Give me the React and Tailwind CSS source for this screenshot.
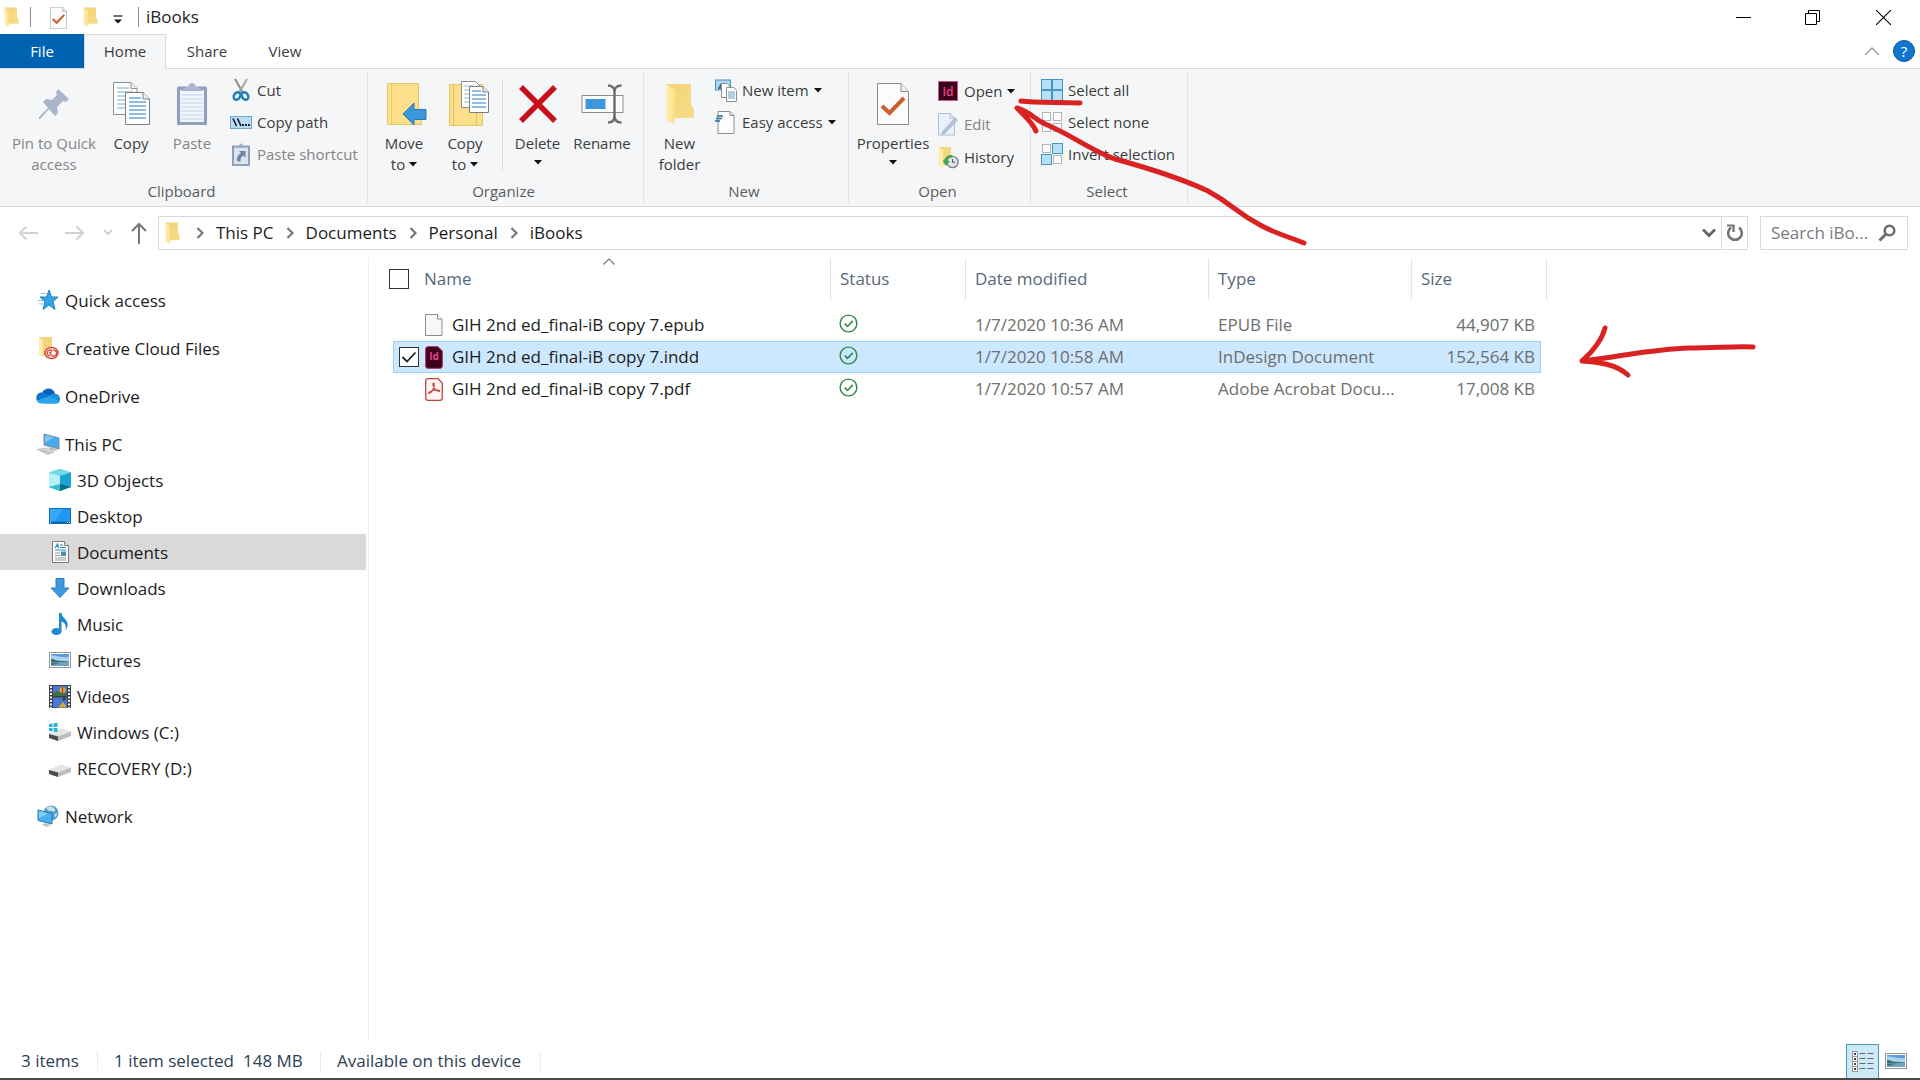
import React from "react";

const Folder = ({ className = "w-4 h-5" }) => (
  <svg viewBox="0 0 30 42" preserveAspectRatio="none" className={className} aria-hidden="true">
    <defs>
      <linearGradient id="folderBack" x1="0" y1="0" x2="1" y2="1">
        <stop offset="0" stopColor="#f3d37a" />
        <stop offset="1" stopColor="#f7dc83" />
      </linearGradient>
      <linearGradient id="folderFlap" x1="0" y1="0" x2="1" y2="0">
        <stop offset="0" stopColor="#fff0b8" />
        <stop offset="1" stopColor="#fbe08a" />
      </linearGradient>
    </defs>
    <path d="M1 1H26V22L29 26V35H5Z" fill="url(#folderBack)" />
    <path d="M1 1L10 7V38L8 41L1 37Z" fill="url(#folderFlap)" />
  </svg>
);

const PropsPage = ({ className = "w-8 h-[42px]" }) => (
  <svg viewBox="0 0 32 42" className={className} aria-hidden="true">
    <path d="M.5.5H24L31.500 8.500V41.500H.5Z" fill="#fcfcfc" stroke="#8b8b8b" />
    <path d="M24 .5V8.500H31.500" fill="#eee" stroke="#8b8b8b" />
    <path d="M5 23L12.500 30L27 15" fill="none" stroke="#cc5f2c" strokeWidth="4" />
  </svg>
);

const PinIcon = () => (
  <svg viewBox="0 0 32 32" className="w-8 h-8" aria-hidden="true">
    <path d="M20 1L31 11L28 14L25 13L19 19L20 25L17 28L11 21L2 31L1 31L1 29L10 20L5 14L8 11L14 12L19 7L18 4Z" fill="#a9b5c9" />
  </svg>
);

const Lines = ({ x, y, w, n, gap = 4, color = "#4a94c4" }) =>
  Array.from({ length: n }, (_, i) => (
    <path key={i} d={`M${x} ${y + i * gap}h${w}`} stroke={color} strokeWidth="1.2" />
  ));

const CopyIcon = () => (
  <svg viewBox="0 0 37 43" className="w-[37px] h-[43px]" aria-hidden="true">
    <path d="M.5.500H18L24 6.500V32.500H.5Z" fill="#fdfdfd" stroke="#8e8e8e" />
    <path d="M18 .5V6.500H24" fill="#eee" stroke="#8e8e8e" />
    <Lines x={4} y={6} w={12} n={1} color="#8fbad8" />
    <Lines x={4} y={10} w={16} n={5} color="#8fbad8" />
    <path d="M12.500 10.500H30L36.500 17V42.500H12.500Z" fill="#fdfdfd" stroke="#7e7e7e" />
    <path d="M30 10.500V17H36.500" fill="#eee" stroke="#7e7e7e" />
    <Lines x={16} y={16} w={12} n={1} />
    <Lines x={16} y={20} w={17} n={5} />
  </svg>
);

const PasteIcon = () => (
  <svg viewBox="0 0 32 44" className="w-8 h-11" aria-hidden="true">
    <rect x="1" y="4.500" width="30" height="38.500" rx="1.500" fill="#8f9fbc" />
    <rect x="4" y="8" width="24" height="32" fill="#f1f4fb" />
    <Lines x={5} y={13} w={22} n={7} color="#cdd8ec" />
    <path d="M5 9C7 5 11 6 12.500 4C13 0 19 0 19.500 4C21 6 25 5 27 9Z" fill="#a9b6cd" />
  </svg>
);

const CutIcon = () => (
  <svg viewBox="0 0 22 24" className="w-[22px] h-6" fill="none" aria-hidden="true">
    <path d="M5 1L13 15" stroke="#8a8a8a" strokeWidth="2" />
    <path d="M17 1L9 15" stroke="#a5a5a5" strokeWidth="2" />
    <ellipse cx="7" cy="18" rx="3" ry="4" transform="rotate(35 7 18)" stroke="#1f7fb5" strokeWidth="2.400" />
    <ellipse cx="15" cy="18" rx="3" ry="4" transform="rotate(-35 15 18)" stroke="#1f7fb5" strokeWidth="2.400" />
  </svg>
);

const CopyPathIcon = () => (
  <svg viewBox="0 0 22 13" className="w-[22px] h-[13px]" aria-hidden="true">
    <rect x=".5" y=".5" width="21" height="12" fill="#b8dcf6" stroke="#6ea7cf" />
    <path d="M3 2.500L6.500 10M7.500 2.500L11 10" stroke="#1a1a1a" strokeWidth="1.600" />
    <path d="M12 9h1.800M15 9h1.800M18 9h1.800" stroke="#1a1a1a" strokeWidth="1.800" />
  </svg>
);

const PasteShortcutIcon = () => (
  <svg viewBox="0 0 18 23" className="w-[18px] h-[23px]" aria-hidden="true">
    <rect x="1" y="3.500" width="16" height="18.500" fill="#dde4f1" stroke="#8f9fbc" strokeWidth="2" />
    <path d="M4 5C5 3 7 3 7.500 2C8 0 10 0 10.500 2C11 3 13 3 14 5Z" fill="#a0aec7" />
    <path d="M7 8H13.500V14.500L11.500 12.500C9.500 13.500 8 15.500 8.500 19L5 18C4.500 14.500 6.500 11.500 9 10Z" fill="#71839f" />
  </svg>
);

const MoveToIcon = () => (
  <svg viewBox="0 0 40 44" className="ml-[6px] w-10 h-11" aria-hidden="true">
    <path d="M.5 1.500H31.500V25L34.500 29V42.500H.5Z" fill="#fbdf8a" stroke="#e6c568" />
    <path d="M4.500 2V42" stroke="#eccb72" />
    <path d="M16 32L27 21V27.500H39V37.500H27V43Z" fill="#3c96dc" stroke="#2b78b8" />
  </svg>
);

const CopyToIcon = () => (
  <svg viewBox="0 0 40 46" className="ml-[8px] w-10 h-[46px]" aria-hidden="true">
    <path d="M.5 3.500H33.500V44.500H.5Z" fill="#fbdf8a" stroke="#e6c568" />
    <path d="M4.500 4V44M27.500 31V44" stroke="#e3c165" />
    <path d="M12.500.5H26.500L31 5V26.500H12.500Z" fill="#fdfdfd" stroke="#8e8e8e" />
    <Lines x={15} y={5} w={9} n={5} gap={4} color="#a9c3d6" />
    <path d="M20.500 5.500H34L39.500 11V31.500H20.500Z" fill="#fdfdfd" stroke="#7e7e7e" />
    <path d="M34 5.500V11H39.500" fill="#eee" stroke="#7e7e7e" />
    <Lines x={23} y={10} w={9} n={1} />
    <Lines x={23} y={14} w={14} n={4} />
  </svg>
);

const DeleteIcon = () => (
  <svg viewBox="0 0 38 38" className="w-[38px] h-[38px]" aria-hidden="true">
    <path d="M2 2L36 36M36 2L2 36" stroke="#c8101c" strokeWidth="5.500" />
  </svg>
);

const RenameIcon = () => (
  <svg viewBox="0 0 43 40" className="w-[43px] h-10" fill="none" aria-hidden="true">
    <rect x="1" y="11.500" width="41" height="17" fill="#fcfcfc" stroke="#8e8e8e" />
    <rect x="4.500" y="15" width="20" height="10" fill="#3b97e0" />
    <path d="M27 1.500C31 1.500 33.500 4 33.500 7.500C33.500 4 36 1.500 40.500 1.500M33.500 6V33M27 38.500C31 38.500 33.500 36 33.500 32C33.500 36 36 38.500 40.500 38.500" stroke="#6b6b6b" strokeWidth="2.400" />
  </svg>
);

const NewItemIcon = () => (
  <svg viewBox="0 0 22 23" className="w-[22px] h-[23px]" aria-hidden="true">
    <rect x=".5" y="1" width="15" height="10" fill="#a9d8ee" stroke="#4a8fb5" />
    <path d="M3 9L6 4L8 8L9 6V10H3Z" fill="#3f6d86" />
    <path d="M6.500 4.500H12L14.500 7V18.500H6.500Z" fill="#fcfcfc" stroke="#8e8e8e" />
    <path d="M11.500 8.500H18.500L21.500 11.500V22.500H11.500Z" fill="#fcfcfc" stroke="#8e8e8e" />
    <Lines x={13} y={13} w={7} n={4} gap={2} color="#7fb0cf" />
  </svg>
);

const EasyIcon = () => (
  <svg viewBox="0 0 22 23" className="w-[22px] h-[23px]" aria-hidden="true">
    <path d="M3 .5H15L19 4.500V22.500H3Z" fill="#fcfcfc" stroke="#8e8e8e" />
    <path d="M15 .5V4.500H19" fill="none" stroke="#8e8e8e" />
    <path d="M2 5h6M1 7.500h6M0 10h5" stroke="#2a6d9e" strokeWidth="1.500" />
  </svg>
);

const IdSquare = () => (
  <svg viewBox="0 0 22 22" className="w-[22px] h-[22px]" aria-hidden="true">
    <rect x="1.500" y="1.500" width="19" height="19" fill="#3a0319" stroke="#c85a86" />
    <text x="11" y="15.500" textAnchor="middle" fontSize="12" fontWeight="600" fontFamily="Open Sans, sans-serif" fill="#e8418b">Id</text>
  </svg>
);

const EditIcon = () => (
  <svg viewBox="0 0 22 23" className="w-[22px] h-[23px]" aria-hidden="true">
    <path d="M1.500.5H13L17.500 5V22H1.500Z" fill="#eaf0fa" stroke="#b1bdd3" />
    <path d="M13 .5V5H17.500" fill="none" stroke="#b1bdd3" />
    <path d="M18 5L20.500 7L8 20L5 21L6 18Z" fill="#b4c1d8" stroke="#93a3c0" strokeWidth=".6" />
  </svg>
);

const HistoryIcon = () => (
  <svg viewBox="0 0 22 23" className="w-[22px] h-[23px]" aria-hidden="true">
    <path d="M1.500 1H14V19H4Z" fill="#f4d67e" />
    <path d="M1.500 1L6 4V21L5 22L1.500 19Z" fill="#ffeeb0" />
    <circle cx="15.500" cy="16" r="5.600" fill="#dfe3e6" stroke="#7f878c" strokeWidth="1.400" />
    <path d="M15.500 13V16.300H18" fill="none" stroke="#555" />
    <path d="M8 16C8.500 12 12 9.500 15 10.500" fill="none" stroke="#3fa348" strokeWidth="2.400" />
    <path d="M5.500 14.500L13 15L9 20Z" fill="#3fa348" />
  </svg>
);

const Grid4 = ({ on }) => {
  const cells = [[1, 1], [12, 1], [1, 12], [12, 12]];
  return (
    <svg viewBox="0 0 22 22" className="w-[22px] h-[22px]" aria-hidden="true">
      {cells.map(([x, y], i) =>
        on[i] ? (
          <rect key={i} x={x - 0.5} y={y - 0.5} width="10" height="10" fill="#b5e0f8" stroke="#4595bf" />
        ) : (
          <rect key={i} x={x + 0.5} y={y + 0.5} width="8" height="8" fill="#fbfcfd" stroke="#b3b3b3" />
        )
      )}
    </svg>
  );
};

const Caret = () => (
  <svg viewBox="0 0 8 5" className="inline-block h-[5px] w-2 shrink-0" aria-hidden="true">
    <path d="M0 0H8L4 4.500Z" fill="#111" />
  </svg>
);

const BigButton = ({ icon, l1, l2, caret, disabled, width }) => (
  <button className={`flex flex-col items-center ${width} ${disabled ? "text-[#848484]" : "text-[#3c3c3c]"}`}>
    <span className="flex h-[59px] items-center justify-center">{icon}</span>
    <span className="whitespace-nowrap leading-[21px]">{l1}</span>
    {(l2 || caret) && (
      <span className={`flex items-center gap-1 whitespace-nowrap leading-[21px] ${l2 ? "h-[21px]" : "h-[17px]"}`}>
        {l2}
        {caret && <Caret />}
      </span>
    )}
  </button>
);

const SmallButton = ({ icon, label, caret, disabled }) => (
  <button className={`flex h-8 items-center gap-[5px] whitespace-nowrap ${disabled ? "text-[#848484]" : "text-[#3c3c3c]"}`}>
    <span className="flex w-[22px] justify-center">{icon}</span>
    <span>{label}</span>
    {caret && <Caret />}
  </button>
);

const Group = ({ label, width, children }) => (
  <section aria-label={label} className={`my-[3px] flex shrink-0 flex-col border-r border-[#e0e2e4] ${width}`}>
    <div className="flex h-[108px] pt-[2px]">{children}</div>
    <h2 className="pr-1 text-center leading-[22px] text-[#5c5c5c]">{label}</h2>
  </section>
);

const StarIcon = () => (
  <svg viewBox="0 0 22 22" className="w-[22px] h-[22px]" aria-hidden="true">
    <path d="M12 1L14.500 8H21L16 12.500L18 20.500L12 16L6 20.500L8 12.500L3 8H9.500Z" fill="#36a3e6" stroke="#2182bd" />
    <path d="M4 4.500h5M1 11.500h5M2 15h4" stroke="#83c3e8" strokeWidth="1.200" />
  </svg>
);
const CloudFolderIcon = () => (
  <svg viewBox="0 0 22 24" className="w-[22px] h-6" aria-hidden="true">
    <path d="M2 1H15V20H5Z" fill="#f4d67e" />
    <path d="M2 1L6 4V21L2 19Z" fill="#ffedb0" />
    <ellipse cx="14.500" cy="17" rx="6.500" ry="5.600" fill="#fff" stroke="#d8402f" strokeWidth="1.500" />
    <path d="M13 20a3 3 0 1 1 2-5.300M16 14.200a3 3 0 1 1-1 5.500L12.800 17.200M12 17l3-1.500" fill="none" stroke="#d8402f" strokeWidth="1.300" />
  </svg>
);
const OneDriveIcon = () => (
  <svg viewBox="0 0 24 16" className="w-6 h-4" aria-hidden="true">
    <path d="M6 5C8-.5 17-1.500 19 5.500L12 10L4 8Z" fill="#0a5fb8" />
    <path d="M6 4.500C1 4 -1 9.500 1 13L14 8.500L10 5.500Z" fill="#1177cf" />
    <path d="M13 8C17 4 24 5.500 24 11C24 14 22 15.500 20 15.500H9Z" fill="#1d8fe0" />
    <path d="M1 13C2 15 4 15.500 6 15.500H20C22 15.500 23 14.500 23.500 13.500L13.500 8Z" fill="#2ba4ef" />
  </svg>
);
const PcIcon = () => (
  <svg viewBox="0 0 24 22" className="w-6 h-[22px]" aria-hidden="true">
    <path d="M8 1L23 5V16L8 12Z" fill="#46abee" stroke="#7d8c98" />
    <path d="M9 2L18 4.500L9 10Z" fill="#7cc5f5" />
    <path d="M13 14L19 15.500L22 18L14 17Z" fill="#b5bcc2" />
    <path d="M1 16.500L11 15L18 19L12 21.500Z" fill="#e1e4e6" stroke="#a8adb1" strokeWidth=".7" />
    <path d="M4 17L13 20M7 16.500L15 19.500" stroke="#a8adb1" strokeWidth=".8" />
  </svg>
);
const CubeIcon = () => (
  <svg viewBox="0 0 22 22" className="w-[22px] h-[22px]" aria-hidden="true">
    <path d="M11 0L22 3.500V18L11 22L0 18V3.500Z" fill="#28b2cc" />
    <path d="M0 3.500L11 0L22 3.500L11 8Z" fill="#6fd9e6" />
    <path d="M0 3.500L11 7V16L0 18Z" fill="#b5f0f4" />
    <path d="M11 7L22 3.500V18L11 15Z" fill="#19a5cf" />
    <path d="M11 15L22 18L11 22Z" fill="#0b6a8a" />
    <path d="M0 18L11 15V22Z" fill="#2fc0d3" />
  </svg>
);
const DesktopIcon = () => (
  <svg viewBox="0 0 22 16" className="w-[22px] h-4" aria-hidden="true">
    <rect x=".5" y=".5" width="21" height="15" fill="#1e98f0" stroke="#0f6db5" />
    <path d="M1 1H14L5 14H1Z" fill="#36a8f8" />
    <path d="M1 14.500H21" stroke="#0c5d9e" strokeWidth="1.500" />
    <path d="M1 14.500h1M18 14.500h1M20 14.500h1" stroke="#fff" />
  </svg>
);
const DocIcon = () => (
  <svg viewBox="0 0 17 22" className="w-[17px] h-[22px]" aria-hidden="true">
    <path d="M.5.5H12.500L16.500 4.500V21.500H.5Z" fill="#fdfdfd" stroke="#7c7c7c" />
    <path d="M12.500.5V4.500H16.500" fill="#e5e5e5" stroke="#7c7c7c" />
    <path d="M3 7L5.500 3L6.500 7M4 5.500H6" fill="none" stroke="#2f8fc4" strokeWidth="1.200" />
    <path d="M8 4h3M8 6.500h6M3 9h11" stroke="#2f8fc4" strokeWidth="1.200" />
    <path d="M3 12h5M3 14.500h5M3 17h11M3 19h11" stroke="#9a9a9a" />
    <rect x="9" y="10.500" width="5" height="4.500" fill="#4c8fb5" />
  </svg>
);
const DownIcon = () => (
  <svg viewBox="0 0 20 20" className="w-5 h-5" aria-hidden="true">
    <path d="M6 .5H14V10H19L10 19.500L1 10H6Z" fill="#3f97dd" stroke="#2f7dbd" />
  </svg>
);
const MusicIcon = () => (
  <svg viewBox="0 0 18 22" className="w-[18px] h-[22px]" aria-hidden="true">
    <ellipse cx="5.500" cy="18.500" rx="5" ry="3.500" fill="#1c8ad0" />
    <path d="M8 0H10.500C11 5 17 6 16.500 12C16.300 14.500 15.500 16 14.500 17C15.500 12 14 10 10.500 8.500V18.500H8Z" fill="#1c8ad0" />
  </svg>
);
const PictureIcon = () => (
  <svg viewBox="0 0 22 16" className="w-[22px] h-4" aria-hidden="true">
    <rect x=".5" y=".5" width="21" height="15" fill="#fff" stroke="#8f989e" />
    <rect x="2" y="2" width="18" height="12" fill="#a9d3f0" />
    <path d="M2 3.500C8 3 12 6 20 5V2H2Z" fill="#5d9cd8" />
    <path d="M2 6.500L8 8.500L20 9.500V10.500H2Z" fill="#3c6f68" />
    <path d="M2 10.500H20V14H2Z" fill="#6fa3bf" />
    <path d="M2 10.500H11L5 13H2Z" fill="#47788a" />
  </svg>
);
const VideoIcon = () => (
  <svg viewBox="0 0 22 23" className="w-[22px] h-[23px]" aria-hidden="true">
    <rect width="22" height="23" fill="#3a3f4a" />
    <rect x="4" y="1" width="14" height="10" fill="#4a76d4" />
    <rect x="4" y="12.500" width="14" height="10" fill="#4a76d4" />
    <path d="M4 8L9 6L14 9L18 8V11H4Z" fill="#426f3c" />
    <circle cx="13.500" cy="5" r="3" fill="#e7b52c" />
    <path d="M13.500 2V8" stroke="#b33a2a" strokeWidth="1.500" />
    <path d="M9 22.500L14 17L18 22.500Z" fill="#e0a72d" />
    <circle cx="15" cy="14" r="1.500" fill="#3a2d20" />
    <path d="M2 1V23M20 1V23" stroke="#f2f2f2" strokeWidth="2" strokeDasharray="2 1.500" />
  </svg>
);
const DriveIcon = ({ win }) => (
  <svg viewBox="0 0 22 20" className="w-[22px] h-5" aria-hidden="true">
    <path d="M0 12L12 7L22 9.500V14L9 19L0 16Z" fill="#bdbdbd" />
    <path d="M0 12L12 7L22 9.500L9 14.500Z" fill="#e6e6e6" />
    <path d="M0 12L9 14.500V19L0 16Z" fill="#4c4c4c" />
    {win && (
      <g fill="#2bb4d2">
        <path d="M0 2L3.500 1.500V5H0ZM4.500 1.300L8.500 .700V5H4.500ZM0 6H3.500V9.500L0 9ZM4.500 6H8.500V10.200L4.500 9.600Z" />
      </g>
    )}
  </svg>
);
const NetworkIcon = () => (
  <svg viewBox="0 0 22 22" className="w-[22px] h-[22px]" aria-hidden="true">
    <circle cx="14" cy="8" r="7.500" fill="#4f9ac6" />
    <path d="M10 2C14 0 19 3 18 6C16 8 15 5 13 6C11 6 9 4 10 2ZM17 9L21 8L18 13Z" fill="#bfe0ee" />
    <path d="M1 5L15 8.500V19L1 15.500Z" fill="#4bb1ee" stroke="#2c7db0" />
    <path d="M2 6L11 8.500L2 13Z" fill="#86cdf6" />
    <path d="M5 19.500L9 18L14 20.500L9 22Z" fill="#b9c4cb" />
  </svg>
);

const NAV = [
  { label: "Quick access", icon: <StarIcon />, gap: false },
  { label: "Creative Cloud Files", icon: <CloudFolderIcon />, gap: true },
  { label: "OneDrive", icon: <OneDriveIcon />, gap: true },
  { label: "This PC", icon: <PcIcon />, gap: true },
  { label: "3D Objects", icon: <CubeIcon />, sub: true },
  { label: "Desktop", icon: <DesktopIcon />, sub: true },
  { label: "Documents", icon: <DocIcon />, sub: true, active: true },
  { label: "Downloads", icon: <DownIcon />, sub: true },
  { label: "Music", icon: <MusicIcon />, sub: true },
  { label: "Pictures", icon: <PictureIcon />, sub: true },
  { label: "Videos", icon: <VideoIcon />, sub: true },
  { label: "Windows (C:)", icon: <DriveIcon win />, sub: true },
  { label: "RECOVERY (D:)", icon: <DriveIcon />, sub: true },
  { label: "Network", icon: <NetworkIcon />, gap: true },
];

const EpubIcon = () => (
  <svg viewBox="0 0 18 22" className="w-[18px] h-[22px]" aria-hidden="true">
    <path d="M.5.5H12.500L17 5V21.500H.5Z" fill="#f6f7f9" stroke="#8c8c8c" />
    <path d="M12.500.5V5H17" fill="#fff" stroke="#8c8c8c" />
  </svg>
);
const InddIcon = () => (
  <svg viewBox="0 0 18 23" className="w-[18px] h-[23px]" aria-hidden="true">
    <path d="M3 .7H13L17.300 5V20C17.300 21.500 16.500 22.300 15 22.300H3C1.500 22.300 .7 21.500 .7 20V3C.7 1.500 1.500 .7 3 .7Z" fill="#3a0319" stroke="#b5245f" />
    <text x="9" y="14" textAnchor="middle" fontSize="10" fontWeight="700" fontFamily="Open Sans, sans-serif" fill="#e8418b">Id</text>
  </svg>
);
const PdfIcon = () => (
  <svg viewBox="0 0 18 23" className="w-[18px] h-[23px]" fill="none" aria-hidden="true">
    <path d="M3 .7H13L17.300 5V20C17.300 21.500 16.500 22.300 15 22.300H3C1.500 22.300 .7 21.500 .7 20V3C.7 1.500 1.500 .7 3 .7Z" fill="#fdf4f3" stroke="#c2453e" strokeWidth="1.300" />
    <path d="M4 15.500C6.500 15 9.500 10 9.200 6.500C9 4.500 7.500 5 8 7C8.700 10.500 12 13.500 14.500 13.500C15.500 12 11 11.500 8 12.500C5.500 13.200 3 14.800 4 15.500Z" stroke="#c2453e" strokeWidth="1.200" />
  </svg>
);

const FILES = [
  { name: "GIH 2nd ed_final-iB copy 7.epub", icon: <EpubIcon />, date: "1/7/2020 10:36 AM", type: "EPUB File", size: "44,907 KB" },
  { name: "GIH 2nd ed_final-iB copy 7.indd", icon: <InddIcon />, date: "1/7/2020 10:58 AM", type: "InDesign Document", size: "152,564 KB", selected: true },
  { name: "GIH 2nd ed_final-iB copy 7.pdf", icon: <PdfIcon />, date: "1/7/2020 10:57 AM", type: "Adobe Acrobat Docu...", size: "17,008 KB" },
];

const Synced = () => (
  <svg viewBox="0 0 20 20" className="mb-[3px] block h-[19px] w-[19px]" fill="none" role="img" aria-label="Available">
    <circle cx="10" cy="10" r="8.800" stroke="#35894a" strokeWidth="1.500" />
    <path d="M6 10.200L9 13L14.500 7.300" stroke="#35894a" strokeWidth="1.800" />
  </svg>
);

const Crumb = ({ label }) => (
  <>
    <svg viewBox="0 0 8 12" className="mx-3 h-3 w-2 shrink-0" fill="none" aria-hidden="true">
      <path d="M1.500 1L6.500 6L1.500 11" stroke="#777" strokeWidth="2.200" />
    </svg>
    <button className="whitespace-nowrap">{label}</button>
  </>
);

function TitleBar() {
  return (
    <header className="flex h-[34px] items-center bg-white">
      <div className="flex flex-1 items-center">
        <span className="ml-1"><Folder className="h-5 w-[15px]" /></span>
        <span className="ml-[11px] h-5 w-px bg-[#8e8e8e]" />
        <button aria-label="Properties" className="ml-[19px] mt-[2px]"><PropsPage className="h-[22px] w-[17px]" /></button>
        <button aria-label="New folder" className="ml-4"><Folder className="h-5 w-[15px]" /></button>
        <button aria-label="Customize Quick Access Toolbar" className="ml-[15px] mt-1">
          <svg viewBox="0 0 10 9" className="h-[9px] w-[10px]" aria-hidden="true">
            <path d="M.5 1H9.500" stroke="#111" strokeWidth="1.200" />
            <path d="M1 4.500H9L5 8.500Z" fill="#111" />
          </svg>
        </button>
        <span className="ml-[15px] h-5 w-px bg-[#8e8e8e]" />
        <h1 className="ml-[7px] text-[17px] leading-6 text-[#222]">iBooks</h1>
      </div>
      <div className="flex items-center">
        <button aria-label="Minimize" className="flex h-[34px] w-[70px] items-center justify-center">
          <svg viewBox="0 0 15 15" className="h-[15px] w-[15px]" aria-hidden="true"><path d="M0 7.500H15" stroke="#000" /></svg>
        </button>
        <button aria-label="Restore" className="flex h-[34px] w-[69px] items-center justify-center">
          <svg viewBox="0 0 15 15" className="h-[15px] w-[15px]" fill="none" stroke="#000" aria-hidden="true">
            <path d="M.5 3.500H11.500V14.500H.5ZM3.500 3.500V.5H14.500V11.500H11.500" />
          </svg>
        </button>
        <button aria-label="Close" className="flex h-[34px] w-[73px] items-center justify-center">
          <svg viewBox="0 0 15 15" className="h-[15px] w-[15px]" aria-hidden="true"><path d="M0 0L15 15M15 0L0 15" stroke="#000" strokeWidth="1.100" /></svg>
        </button>
      </div>
    </header>
  );
}

function Tabs() {
  return (
    <nav className="flex h-[35px] border-b border-[#d9dadc] bg-white text-[15px] text-[#3c3c3c]">
      <button className="w-[84px] bg-[#0063b1] text-white">File</button>
      <button className="-mb-px w-[82px] border border-b-0 border-[#d9dadc] bg-[#f5f6f8] pb-px">Home</button>
      <button className="w-[82px]">Share</button>
      <button className="w-[74px]">View</button>
      <div className="ml-auto flex items-center pr-[5px]">
        <button aria-label="Minimize the Ribbon" className="mr-[13px]">
          <svg viewBox="0 0 16 10" className="h-[10px] w-4" fill="none" aria-hidden="true"><path d="M1 9L8 2L15 9" stroke="#a2a2a2" strokeWidth="1.500" /></svg>
        </button>
        <button aria-label="Help" className="flex h-[22px] w-[22px] items-center justify-center rounded-full border border-[#0a5a9c] bg-[#1177cc] text-[15px] leading-none text-white">?</button>
      </div>
    </nav>
  );
}

function Ribbon() {
  return (
    <div className="flex h-[138px] border-b border-[#d9dadc] bg-[#f5f6f8] text-[15px]">
      <Group label="Clipboard" width="w-[368px]">
        <BigButton width="w-[108px]" icon={<PinIcon />} l1="Pin to Quick" l2="access" disabled />
        <BigButton width="w-[46px]" icon={<CopyIcon />} l1="Copy" />
        <BigButton width="w-[76px]" icon={<PasteIcon />} l1="Paste" disabled />
        <div className="flex flex-col">
          <SmallButton icon={<CutIcon />} label="Cut" />
          <SmallButton icon={<CopyPathIcon />} label="Copy path" />
          <SmallButton icon={<PasteShortcutIcon />} label="Paste shortcut" disabled />
        </div>
      </Group>
      <Group label="Organize" width="w-[276px]">
        <BigButton width="w-[72px]" icon={<MoveToIcon />} l1="Move" l2="to" caret />
        <BigButton width="w-[50px]" icon={<CopyToIcon />} l1="Copy" l2="to" caret />
        <span className="ml-3 mt-[6px] h-[91px] w-px bg-[#d9dbdd]" />
        <BigButton width="w-[69px]" icon={<DeleteIcon />} l1="Delete" caret />
        <BigButton width="w-[60px]" icon={<RenameIcon />} l1="Rename" />
      </Group>
      <Group label="New" width="w-[205px]">
        <BigButton width="w-[71px]" icon={<Folder className="h-[42px] w-[30px]" />} l1="New" l2="folder" />
        <div className="flex flex-col">
          <SmallButton icon={<NewItemIcon />} label="New item" caret />
          <SmallButton icon={<EasyIcon />} label="Easy access" caret />
        </div>
      </Group>
      <Group label="Open" width="w-[182px]">
        <BigButton width="w-[88px]" icon={<PropsPage />} l1="Properties" caret />
        <div className="flex flex-col gap-px pt-px">
          <SmallButton icon={<IdSquare />} label="Open" caret />
          <SmallButton icon={<EditIcon />} label="Edit" disabled />
          <SmallButton icon={<HistoryIcon />} label="History" />
        </div>
      </Group>
      <Group label="Select" width="w-[157px]">
        <div className="ml-[10px] flex flex-col">
          <SmallButton icon={<Grid4 on={[1, 1, 1, 1]} />} label="Select all" />
          <SmallButton icon={<Grid4 on={[0, 0, 0, 0]} />} label="Select none" />
          <SmallButton icon={<Grid4 on={[0, 1, 1, 0]} />} label="Invert selection" />
        </div>
      </Group>
    </div>
  );
}

function AddressBar() {
  return (
    <div className="flex h-[51px] items-center pr-3 text-[17px] text-[#1c1c1c]">
      <div className="flex w-[158px] items-center">
        <button aria-label="Back" className="ml-[18px]">
          <svg viewBox="0 0 20 16" className="h-4 w-5" fill="none" aria-hidden="true"><path d="M20 8H2M8.500 1.500L2 8L8.500 14.500" stroke="#d2d2d2" strokeWidth="2" /></svg>
        </button>
        <button aria-label="Forward" className="ml-[27px]">
          <svg viewBox="0 0 20 16" className="h-4 w-5" fill="none" aria-hidden="true"><path d="M0 8H18M11.500 1.500L18 8L11.500 14.500" stroke="#d2d2d2" strokeWidth="2" /></svg>
        </button>
        <button aria-label="Recent locations" className="ml-[18px]">
          <svg viewBox="0 0 10 7" className="h-[7px] w-[10px]" fill="none" aria-hidden="true"><path d="M1 1L5 5L9 1" stroke="#d2d2d2" strokeWidth="2" /></svg>
        </button>
        <button aria-label="Up" className="ml-[18px]">
          <svg viewBox="0 0 16 22" className="h-[22px] w-4" fill="none" aria-hidden="true"><path d="M8 22V2M1 9L8 2L15 9" stroke="#777" strokeWidth="2" /></svg>
        </button>
      </div>
      <div className="flex h-[34px] flex-1 items-stretch border border-[#d9d9d9] bg-white">
        <div className="flex flex-1 items-center">
          <span className="ml-[6px]"><Folder className="h-[22px] w-[15px]" /></span>
          <span className="w-1" />
          {["This PC", "Documents", "Personal", "iBooks"].map((c) => (
            <Crumb key={c} label={c} />
          ))}
        </div>
        <button aria-label="Previous locations" className="flex w-6 items-center justify-center">
          <svg viewBox="0 0 14 10" className="h-[10px] w-[14px]" fill="none" aria-hidden="true"><path d="M1 1.500L7 7.500L13 1.500" stroke="#666" strokeWidth="2.800" /></svg>
        </button>
        <button aria-label="Refresh" className="flex w-[26px] items-center justify-center border-l border-[#d9d9d9] pl-px">
          <svg viewBox="0 0 18 18" className="h-[18px] w-[18px]" fill="none" aria-hidden="true">
            <path d="M13 3.500A6.800 6.800 0 1 1 5 3.500" stroke="#737373" strokeWidth="2.600" />
            <path d="M1 1.500H7.500V8" stroke="#737373" strokeWidth="2.200" />
          </svg>
        </button>
      </div>
      <label className="ml-3 flex h-[34px] w-[148px] items-center justify-between border border-[#d9d9d9] bg-white pl-[10px] pr-[11px]">
        <input aria-label="Search iBooks" placeholder="Search iBo..." className="w-[104px] min-w-0 bg-transparent outline-none placeholder:text-[#7a7a7a]" />
        <svg viewBox="0 0 18 18" className="h-[18px] w-[18px] shrink-0" fill="none" aria-hidden="true">
          <circle cx="11.500" cy="6.500" r="4.800" stroke="#6e6e6e" strokeWidth="2.600" />
          <path d="M8 10L1.500 16.500" stroke="#6e6e6e" strokeWidth="3" />
        </svg>
      </label>
    </div>
  );
}

function Sidebar() {
  return (
    <nav aria-label="Folders" className="w-[369px] shrink-0 border-r border-[#f0f0f0] pt-[24px] text-[17px] text-[#1c1c1c]">
      <ul>
        {NAV.map((n) => (
          <li key={n.label} className={n.gap ? "mt-3" : ""}>
            <a href="#" className={`mr-[2px] flex h-9 items-center whitespace-nowrap ${n.sub ? "pl-12" : "pl-9"} ${n.active ? "bg-[#d9d9d9]" : ""}`}>
              <span className="mr-[5px] flex w-6 justify-center">{n.icon}</span>
              <span className="pt-px">{n.label}</span>
            </a>
          </li>
        ))}
      </ul>
    </nav>
  );
}

const TickBox = ({ label, checked }) => (
  <label className="relative block h-5 w-5">
    <input type="checkbox" aria-label={label} defaultChecked={checked} className="peer block h-5 w-5 appearance-none border border-[#333] bg-white" />
    <svg viewBox="0 0 20 20" className="pointer-events-none absolute inset-0 hidden h-5 w-5 peer-checked:block" fill="none" aria-hidden="true">
      <path d="M3.500 10L8 14.500L16.500 5.500" stroke="#222" strokeWidth="1.800" />
    </svg>
  </label>
);

function FileTable() {
  const head = "relative border-r border-[#e2e4e6] text-left font-normal";
  return (
    <main className="min-w-0 flex-1 pl-4">
      <table className="w-[1162px] table-fixed border-separate border-spacing-0 text-[17px]">
        <colgroup>
          <col className="w-2" />
          <col className="w-[438px]" />
          <col className="w-[135px]" />
          <col className="w-[243px]" />
          <col className="w-[203px]" />
          <col className="w-[129px]" />
          <col className="w-[6px]" />
        </colgroup>
        <thead>
          <tr className="h-[42px] text-[#58687a]">
            <th colSpan={2} className={`${head} pl-1`}>
              <div className="flex items-center gap-[15px]">
                <TickBox label="Select all items" />
                <span>Name</span>
              </div>
              <svg viewBox="0 0 12 7" className="absolute left-1/2 top-0 -ml-[5px] h-[7px] w-3" fill="none" aria-hidden="true">
                <path d="M.5 6.500L6 1L11.500 6.500" stroke="#777" strokeWidth="1.200" />
              </svg>
            </th>
            <th className={`${head} pl-[9px]`}>Status</th>
            <th className={`${head} pl-[9px]`}>Date modified</th>
            <th className={`${head} pl-[9px]`}>Type</th>
            <th colSpan={2} className={`${head} pl-[9px]`}>Size</th>
          </tr>
        </thead>
        <tbody>
          <tr className="h-[9px]"><td colSpan={7} /></tr>
          {FILES.map((f) => {
            const c = f.selected ? "border-y border-[#99d1ff] bg-[#cce8ff]" : "";
            return (
              <tr key={f.name} className="h-8 text-[#6e6e6e]">
                <td />
                <td className={`p-0 ${c} ${f.selected ? "border-l pl-[5px]" : "pl-[6px]"}`}>
                  <div className="flex items-center text-[#1c1c1c]">
                    <span className="mr-[6px] w-5">{f.selected && <TickBox label={`Select ${f.name}`} checked />}</span>
                    <span className="mr-[9px]">{f.icon}</span>
                    <span className="whitespace-nowrap">{f.name}</span>
                  </div>
                </td>
                <td className={`p-0 pl-2 ${c}`}><Synced /></td>
                <td className={`p-0 pl-[9px] ${c}`}>{f.date}</td>
                <td className={`whitespace-nowrap p-0 pl-[9px] ${c}`}>{f.type}</td>
                <td className={`p-0 text-right ${c} ${f.selected ? "border-r pr-[5px]" : "pr-[6px]"}`}>{f.size}</td>
                <td />
              </tr>
            );
          })}
        </tbody>
      </table>
    </main>
  );
}

function StatusBar() {
  return (
    <footer className="flex h-[38px] items-stretch border-b-2 border-[#484848] text-[17px] text-[#2d4054]">
      <div className="flex items-center pt-[2px]">
        <span className="w-[97px] pl-[21px]">3 items</span>
        <span className="h-5 w-px bg-[#ebebeb]" />
        <span className="w-[145px] whitespace-nowrap pl-4">1 item selected</span>
        <span className="w-[77px]">148 MB</span>
        <span className="h-5 w-px bg-[#ebebeb]" />
        <span className="w-[219px] whitespace-nowrap pl-4">Available on this device</span>
        <span className="h-5 w-px bg-[#ebebeb]" />
      </div>
      <div className="ml-auto flex items-end pr-[13px]">
        <button aria-label="Details view" className="flex h-[34px] w-[33px] items-center justify-center border border-b-0 border-[#4a9ab8] bg-[#cde8f6]">
          <svg viewBox="0 0 22 21" className="h-[21px] w-[22px]" aria-hidden="true">
            {[0, 5, 10, 15].map((y) => (
              <g key={y}>
                <rect x=".5" y={y + 0.5} width="5" height="5" fill="#fff" stroke="#9a9a9a" />
                <rect x="2" y={y + 2} width="2" height="2" fill="#444" />
                <path d={`M7.500 ${y + 2.5}h6M15.500 ${y + 2.5}h6`} stroke="#6a6a6a" />
              </g>
            ))}
          </svg>
        </button>
        <button aria-label="Large icons view" className="mb-[9px] ml-[6px]"><PictureIcon /></button>
      </div>
    </footer>
  );
}

const Annotations = () => (
  <svg viewBox="0 0 800 300" className="pointer-events-none absolute left-[1000px] top-[90px] h-[300px] w-[800px]" fill="none" stroke="#d92222" strokeWidth="5" strokeLinecap="round" strokeLinejoin="round" aria-hidden="true">
    <path d="M21 11C36 13 58 12 80 13" />
    <path d="M36 41C33 33 25 26 17 18C30 22 33 28 45 34C70 44 92 61 115 69C148 78 178 87 208 101C235 116 235 122 262 136C277 144 289 147 304 153" />
    <path d="M753 257C735 256 716 258 690 258C650 259 620 267 582 271M605 238C602 250 592 262 582 271C598 272 616 274 628 285" />
  </svg>
);

export default function App() {
  return (
    <div className="relative flex min-h-screen flex-col overflow-x-clip bg-white font-['Open_Sans','Noto_Sans',sans-serif]">
      <TitleBar />
      <Tabs />
      <Ribbon />
      <AddressBar />
      <div className="flex flex-1">
        <Sidebar />
        <FileTable />
      </div>
      <StatusBar />
      <Annotations />
    </div>
  );
}
